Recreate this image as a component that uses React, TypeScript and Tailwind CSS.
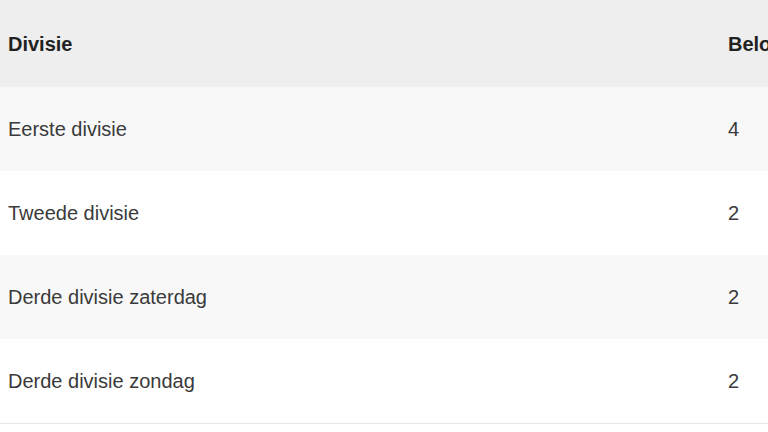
import React from 'react';

interface Row {
  divisie: string;
  aantal: number;
}

const rows: Row[] = [
  { divisie: 'Eerste divisie', aantal: 4 },
  { divisie: 'Tweede divisie', aantal: 2 },
  { divisie: 'Derde divisie zaterdag', aantal: 2 },
  { divisie: 'Derde divisie zondag', aantal: 2 },
];

const App: React.FC = () => {
  return (
    <div className="w-[768px] h-[432px] overflow-hidden bg-white font-['Liberation_Sans',Arial,sans-serif] text-[20px]">
      <table className="w-[1000px] border-collapse table-fixed">
        <colgroup>
          <col className="w-[720px]" />
          <col className="w-[280px]" />
        </colgroup>
        <thead>
          <tr className="h-[87px] bg-[#eeeeee]">
            <th className="pl-2 text-left font-bold text-[#222222]">Divisie</th>
            <th className="pl-2 text-left font-bold text-[#222222] whitespace-nowrap">Beloning</th>
          </tr>
        </thead>
        <tbody>
          {rows.map((row, i) => (
            <tr
              key={row.divisie}
              className={`h-[84px] ${i % 2 === 0 ? 'bg-[#f8f8f8]' : 'bg-white'} ${
                i === rows.length - 1 ? 'border-b border-[#e6e6e6]' : ''
              }`}
            >
              <td className="pl-2 text-[#3a3a3a]">{row.divisie}</td>
              <td className="pl-2 text-[#3a3a3a]">{row.aantal}</td>
            </tr>
          ))}
        </tbody>
      </table>
    </div>
  );
};

export default App;
